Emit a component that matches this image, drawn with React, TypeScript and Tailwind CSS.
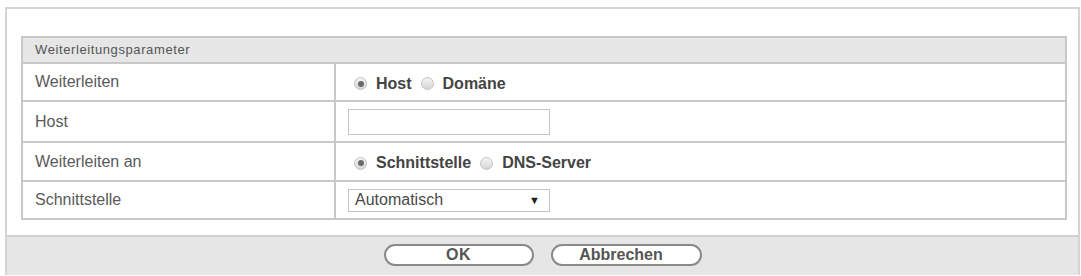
const font = { fontFamily: '"Liberation Sans", Arial, sans-serif' };

function Radio({ checked }: { checked?: boolean }) {
  return (
    <span className="inline-flex h-[13px] w-[13px] shrink-0 items-center justify-center rounded-full border border-[#c4c4c4] bg-gradient-to-b from-[#f4f4f4] to-[#d6d6d6]">
      {checked && <span className="h-[6px] w-[6px] rounded-full bg-[#6a6a6a]" />}
    </span>
  );
}

function RadioGroup({ options }: { options: string[] }) {
  return (
    <div className="flex items-center pl-[18px] pt-[3px] text-[16px] font-bold text-[#444]">
      {options.map((o, i) => (
        <span key={o} className="flex items-center">
          <Radio checked={i === 0} />
          <span className="ml-[9px] mr-[9px]">{o}</span>
        </span>
      ))}
    </div>
  );
}

export default function App() {
  const cell = "border-2 border-[#c8c8c8]";
  const label = `${cell} pl-[12px] text-[16px] text-[#5a5a5a]`;
  return (
    <div className="h-[276px] w-[1081px] overflow-hidden bg-white" style={font}>
      <div className="ml-[5px] mt-[7px] w-[1075px] border-2 border-b-0 border-[#d4d4d4]">
        <div className="pl-[14px] pr-[10px] pt-[27px] pb-[15px]">
          <table className="w-[1046px] border-collapse">
            <tbody>
              <tr className="h-[26px] bg-[#e6e6e6]">
                <td colSpan={2} className={`${cell} pl-[12px] text-[13px] tracking-[0.6px] text-[#555]`}>
                  Weiterleitungsparameter
                </td>
              </tr>
              <tr className="h-[38px]">
                <td className={`${label} w-[313px]`}>Weiterleiten</td>
                <td className={cell}>
                  <RadioGroup options={["Host", "Domäne"]} />
                </td>
              </tr>
              <tr className="h-[41px]">
                <td className={label}>Host</td>
                <td className={cell}>
                  <div className="pl-[12px]">
                    <input className="block h-[26px] w-[202px] border border-[#c4c4c4] bg-white outline-none" />
                  </div>
                </td>
              </tr>
              <tr className="h-[39px]">
                <td className={label}>Weiterleiten an</td>
                <td className={cell}>
                  <RadioGroup options={["Schnittstelle", "DNS-Server"]} />
                </td>
              </tr>
              <tr className="h-[38px]">
                <td className={label}>Schnittstelle</td>
                <td className={cell}>
                  <div className="pl-[12px]">
                    <div className="flex h-[23px] w-[202px] items-center justify-between border border-[#c4c4c4] bg-white pl-[6px] pr-[9px] text-[16px] text-[#4a4a4a]">
                      <span>Automatisch</span>
                      <span className="text-[11px] text-[#222]">▼</span>
                    </div>
                  </div>
                </td>
              </tr>
            </tbody>
          </table>
        </div>
        <div className="flex h-[40px] items-center justify-center gap-[17px] border-t-2 border-[#d0d0d0] bg-[#e6e6e6] pb-[2px]">
          <button className="h-[22px] w-[150px] rounded-full border-2 border-[#8a8a8a] bg-white text-[16px] font-bold leading-none tracking-[0.5px] text-[#555]">
            OK
          </button>
          <button className="h-[22px] w-[151px] rounded-full border-2 border-[#8a8a8a] bg-white pr-[10px] text-[16px] font-bold leading-none text-[#555]">
            Abbrechen
          </button>
        </div>
      </div>
    </div>
  );
}
